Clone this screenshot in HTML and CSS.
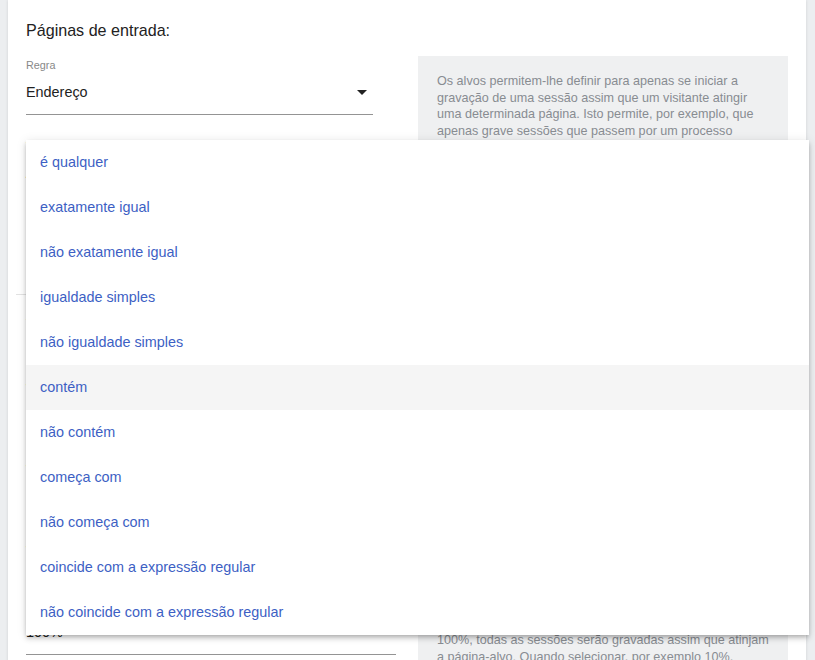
FILE: index.html
```html
<!DOCTYPE html>
<html lang="pt">
<head>
<meta charset="UTF-8">
<meta name="viewport" content="width=device-width, initial-scale=1.0">
<title>Gravação - Alvos</title>
<link rel="stylesheet" href="styles.css">
</head>
<body>

<div class="card">
<section class="group">
<h2 class="group-title">Páginas de entrada:</h2>
<div class="group-row">
<div class="fields">
<div class="field">
<label class="field-label">Regra</label>
<div class="select"><span>Endereço</span><i class="caret"></i></div>
</div>
<div class="field">
<label class="field-label">Valor</label>
<div class="select"><span>/checkout</span></div>
</div>
<button class="add-btn">+ Adicionar regra</button>
</div>
<div class="hint">
<p>Os alvos permitem-lhe definir para apenas se iniciar a gravação de uma sessão assim que um visitante atingir uma determinada página. Isto permite, por exemplo, que apenas grave sessões que passem por um processo específico de checkout ou que visitem uma página de campanha.</p>
</div>
</div>
</section>

<hr class="divider">

<section class="group">
<h2 class="group-title">Taxa de amostragem:</h2>
<div class="group-row">
<div class="fields fields-wide">
<div class="field">
<label class="field-label">Dispositivos</label>
<div class="select"><span>Todos</span><i class="caret"></i></div>
</div>
<div class="field">
<label class="field-label">Países</label>
<div class="select"><span>Todos</span><i class="caret"></i></div>
</div>
<div class="field">
<label class="field-label">Navegadores</label>
<div class="select"><span>Todos</span><i class="caret"></i></div>
</div>
<div class="field">
<label class="field-label">Percentagem de sessões</label>
<div class="select"><span>100%</span><i class="caret"></i></div>
</div>
</div>
<div class="hint">
<p>A taxa de amostragem permite-lhe gravar apenas uma parte das sessões dos visitantes que atingem as páginas de entrada definidas acima. Isto é útil em sites com muito tráfego, onde não precisa de gravar todas as visitas para obter uma boa visão do comportamento dos seus utilizadores, e ajuda a poupar a quota de gravações disponível no seu plano. As sessões são escolhidas de forma aleatória no momento em que o visitante chega à página-alvo, pelo que a amostra recolhida é representativa de todo o tráfego do site.</p>
<p>Os filtros de dispositivos, países e navegadores são aplicados antes da percentagem escolhida, ou seja, a amostragem é calculada apenas sobre as sessões que cumprem todos os filtros definidos.</p>
<p>100%, todas as sessões serão gravadas assim que atinjam a página-alvo. Quando selecionar, por exemplo 10%, aproximadamente uma em cada dez sessões será gravada.</p>
</div>
</div>
</section>

<ul class="menu">
<li>é qualquer</li>
<li>exatamente igual</li>
<li>não exatamente igual</li>
<li>igualdade simples</li>
<li>não igualdade simples</li>
<li class="active">contém</li>
<li>não contém</li>
<li>começa com</li>
<li>não começa com</li>
<li>coincide com a expressão regular</li>
<li>não coincide com a expressão regular</li>
</ul>
</div>

</body>
</html>
```

FILE: styles.css
```css
html, body {
height: 100%;
overflow: hidden;
}
body {
margin: 0;
background: #eceef0;
font-family: "Liberation Sans", Arial, sans-serif;
color: #222;
}
.card {
position: relative;
margin-left: 8px;
width: 798px;
min-height: 1000px;
background: #fff;
box-shadow: 0 0 3px rgba(0, 0, 0, 0.12);
}
.group {
padding: 20px 18px 0 18px;
}
.group-title {
margin: 0 0 16px 0;
font-size: 16.1px;
font-weight: normal;
line-height: 20px;
color: #222;
}
.group-row {
display: flex;
align-items: flex-start;
}
.fields {
width: 347px;
padding-top: 2px;
}
.fields-wide {
width: 370px;
padding-top: 4px;
}
.field {
margin-bottom: 24px;
}
.field-label {
display: block;
font-size: 10.8px;
line-height: 14px;
color: #888;
}
.select {
position: relative;
margin-top: 10px;
height: 20px;
padding-bottom: 12px;
border-bottom: 1px solid #949494;
font-size: 14.4px;
line-height: 20px;
color: #222;
}
.caret {
position: absolute;
right: 6px;
top: 8px;
width: 0;
height: 0;
border-left: 5px solid transparent;
border-right: 5px solid transparent;
border-top: 5px solid #222;
}
.add-btn {
display: block;
height: 36px;
padding: 0 12px;
border: 0;
background: none;
font-family: inherit;
font-size: 14px;
color: #3d5fc4;
}
.hint {
margin-left: auto;
width: 334px;
padding: 17px 17px 18px 19px;
background: #eff0f1;
font-size: 12.6px;
line-height: 16.7px;
color: #888c91;
}
.hint p {
margin: 0 0 15px 0;
}
.hint p:last-child {
margin-bottom: 0;
}
.divider {
margin: 38px 16px 0 8px;
border: 0;
border-top: 1px solid #e2e2e2;
}
.menu {
position: absolute;
left: 18px;
top: 140px;
width: 783px;
margin: 0;
padding: 0;
list-style: none;
background: #fff;
box-shadow: 0 2px 4px -1px rgba(0, 0, 0, 0.2), 0 4px 5px rgba(0, 0, 0, 0.12), 0 1px 10px rgba(0, 0, 0, 0.1);
}
.menu li {
height: 45px;
padding-left: 14px;
font-size: 14.4px;
line-height: 45px;
color: #3d5fc4;
cursor: pointer;
}
.menu li.active {
background: #f5f5f5;
}
```
